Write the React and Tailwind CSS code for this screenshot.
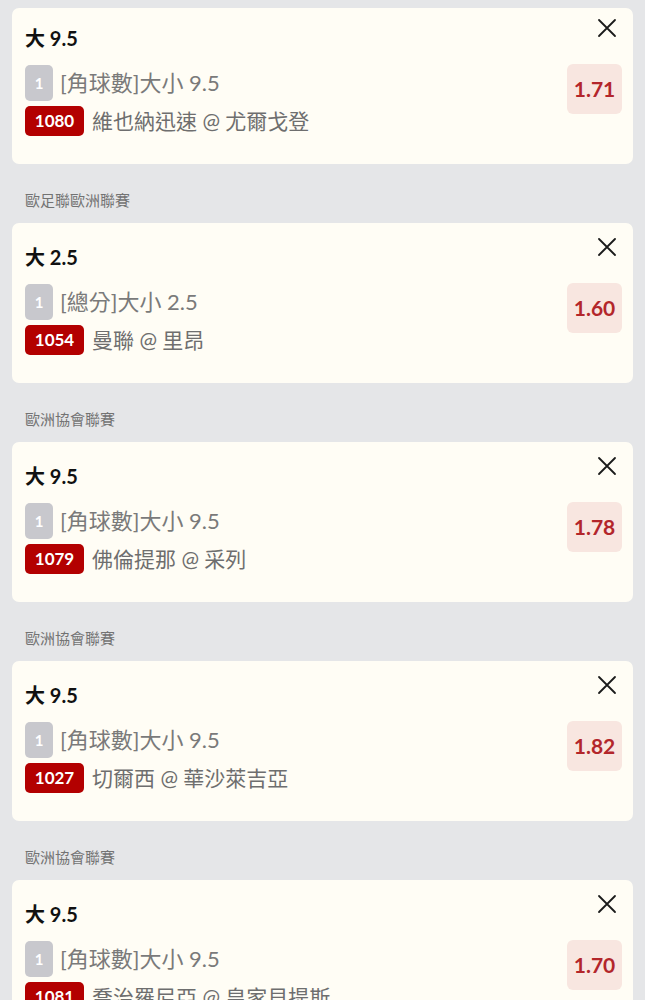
import React from "react";

const bets = [
  { league: null, title: "大 9.5", market: "[角球數]大小 9.5", code: "1080", match: "維也納迅速 @ 尤爾戈登", odds: "1.71" },
  { league: "歐足聯歐洲聯賽", title: "大 2.5", market: "[總分]大小 2.5", code: "1054", match: "曼聯 @ 里昂", odds: "1.60" },
  { league: "歐洲協會聯賽", title: "大 9.5", market: "[角球數]大小 9.5", code: "1079", match: "佛倫提那 @ 采列", odds: "1.78" },
  { league: "歐洲協會聯賽", title: "大 9.5", market: "[角球數]大小 9.5", code: "1027", match: "切爾西 @ 華沙萊吉亞", odds: "1.82" },
  { league: "歐洲協會聯賽", title: "大 9.5", market: "[角球數]大小 9.5", code: "1081", match: "喬治羅尼亞 @ 皇家貝提斯", odds: "1.70" },
];

const font = { fontFamily: '"Lato", "Noto Sans CJK TC", "Noto Sans", sans-serif' };

function CloseIcon() {
  return (
    <svg width="20" height="20" viewBox="0 0 20 20" fill="none" stroke="#1a1a1a" strokeWidth="1.8" strokeLinecap="round">
      <path d="M2 2 L18 18 M18 2 L2 18" />
    </svg>
  );
}

function Card({ bet, first }) {
  return (
    <div className={`flex rounded-[7px] bg-[#fffdf5] pl-[13px] pr-[11px] pb-[28px] ${first ? "pt-[10px]" : "pt-[14px]"}`}>
      <div className="flex flex-1 flex-col">
        <div className="mt-[6px] h-[28px] text-[20px] font-bold leading-[28px] text-[#111]">{bet.title}</div>
        <div className="mt-[13px] flex h-[36px] items-center">
          <div className="flex h-[36px] w-[28px] items-center justify-center rounded-[5px] bg-[#c8c8cd] text-[15px] font-bold text-white">1</div>
          <div className="ml-[7px] whitespace-nowrap text-[22px] leading-[30px] text-[#7a7a7a]">{bet.market}</div>
        </div>
        <div className="mt-[5px] flex h-[30px] items-center">
          <div className="flex h-[30px] w-[59px] items-center justify-center rounded-[5px] bg-[#b30000] text-[17px] font-bold leading-[22px] text-white">{bet.code}</div>
          <div className="ml-[8px] whitespace-nowrap text-[21px] leading-[30px] text-[#6e6e6e]">{bet.match}</div>
        </div>
      </div>
      <div className="flex flex-col items-end">
        <div className="mr-[5px] h-[20px] w-[20px]">
          <CloseIcon />
        </div>
        <div className="mt-[26px] flex h-[50px] w-[55px] items-center justify-center rounded-[6px] bg-[#f8e6e0] text-[21px] font-bold text-[#b3262b]">
          {bet.odds}
        </div>
      </div>
    </div>
  );
}

export default function App() {
  return (
    <div className="min-h-[1000px] bg-[#e5e6e8] px-[12px] pt-[8px]" style={font}>
      {bets.map((bet, i) => (
        <div key={i}>
          {bet.league && (
            <div className="pt-[25px] pb-[12px] pl-[13px] text-[15px] leading-[22px] text-[#737373]">{bet.league}</div>
          )}
          <Card bet={bet} first={i === 0} />
        </div>
      ))}
    </div>
  );
}
